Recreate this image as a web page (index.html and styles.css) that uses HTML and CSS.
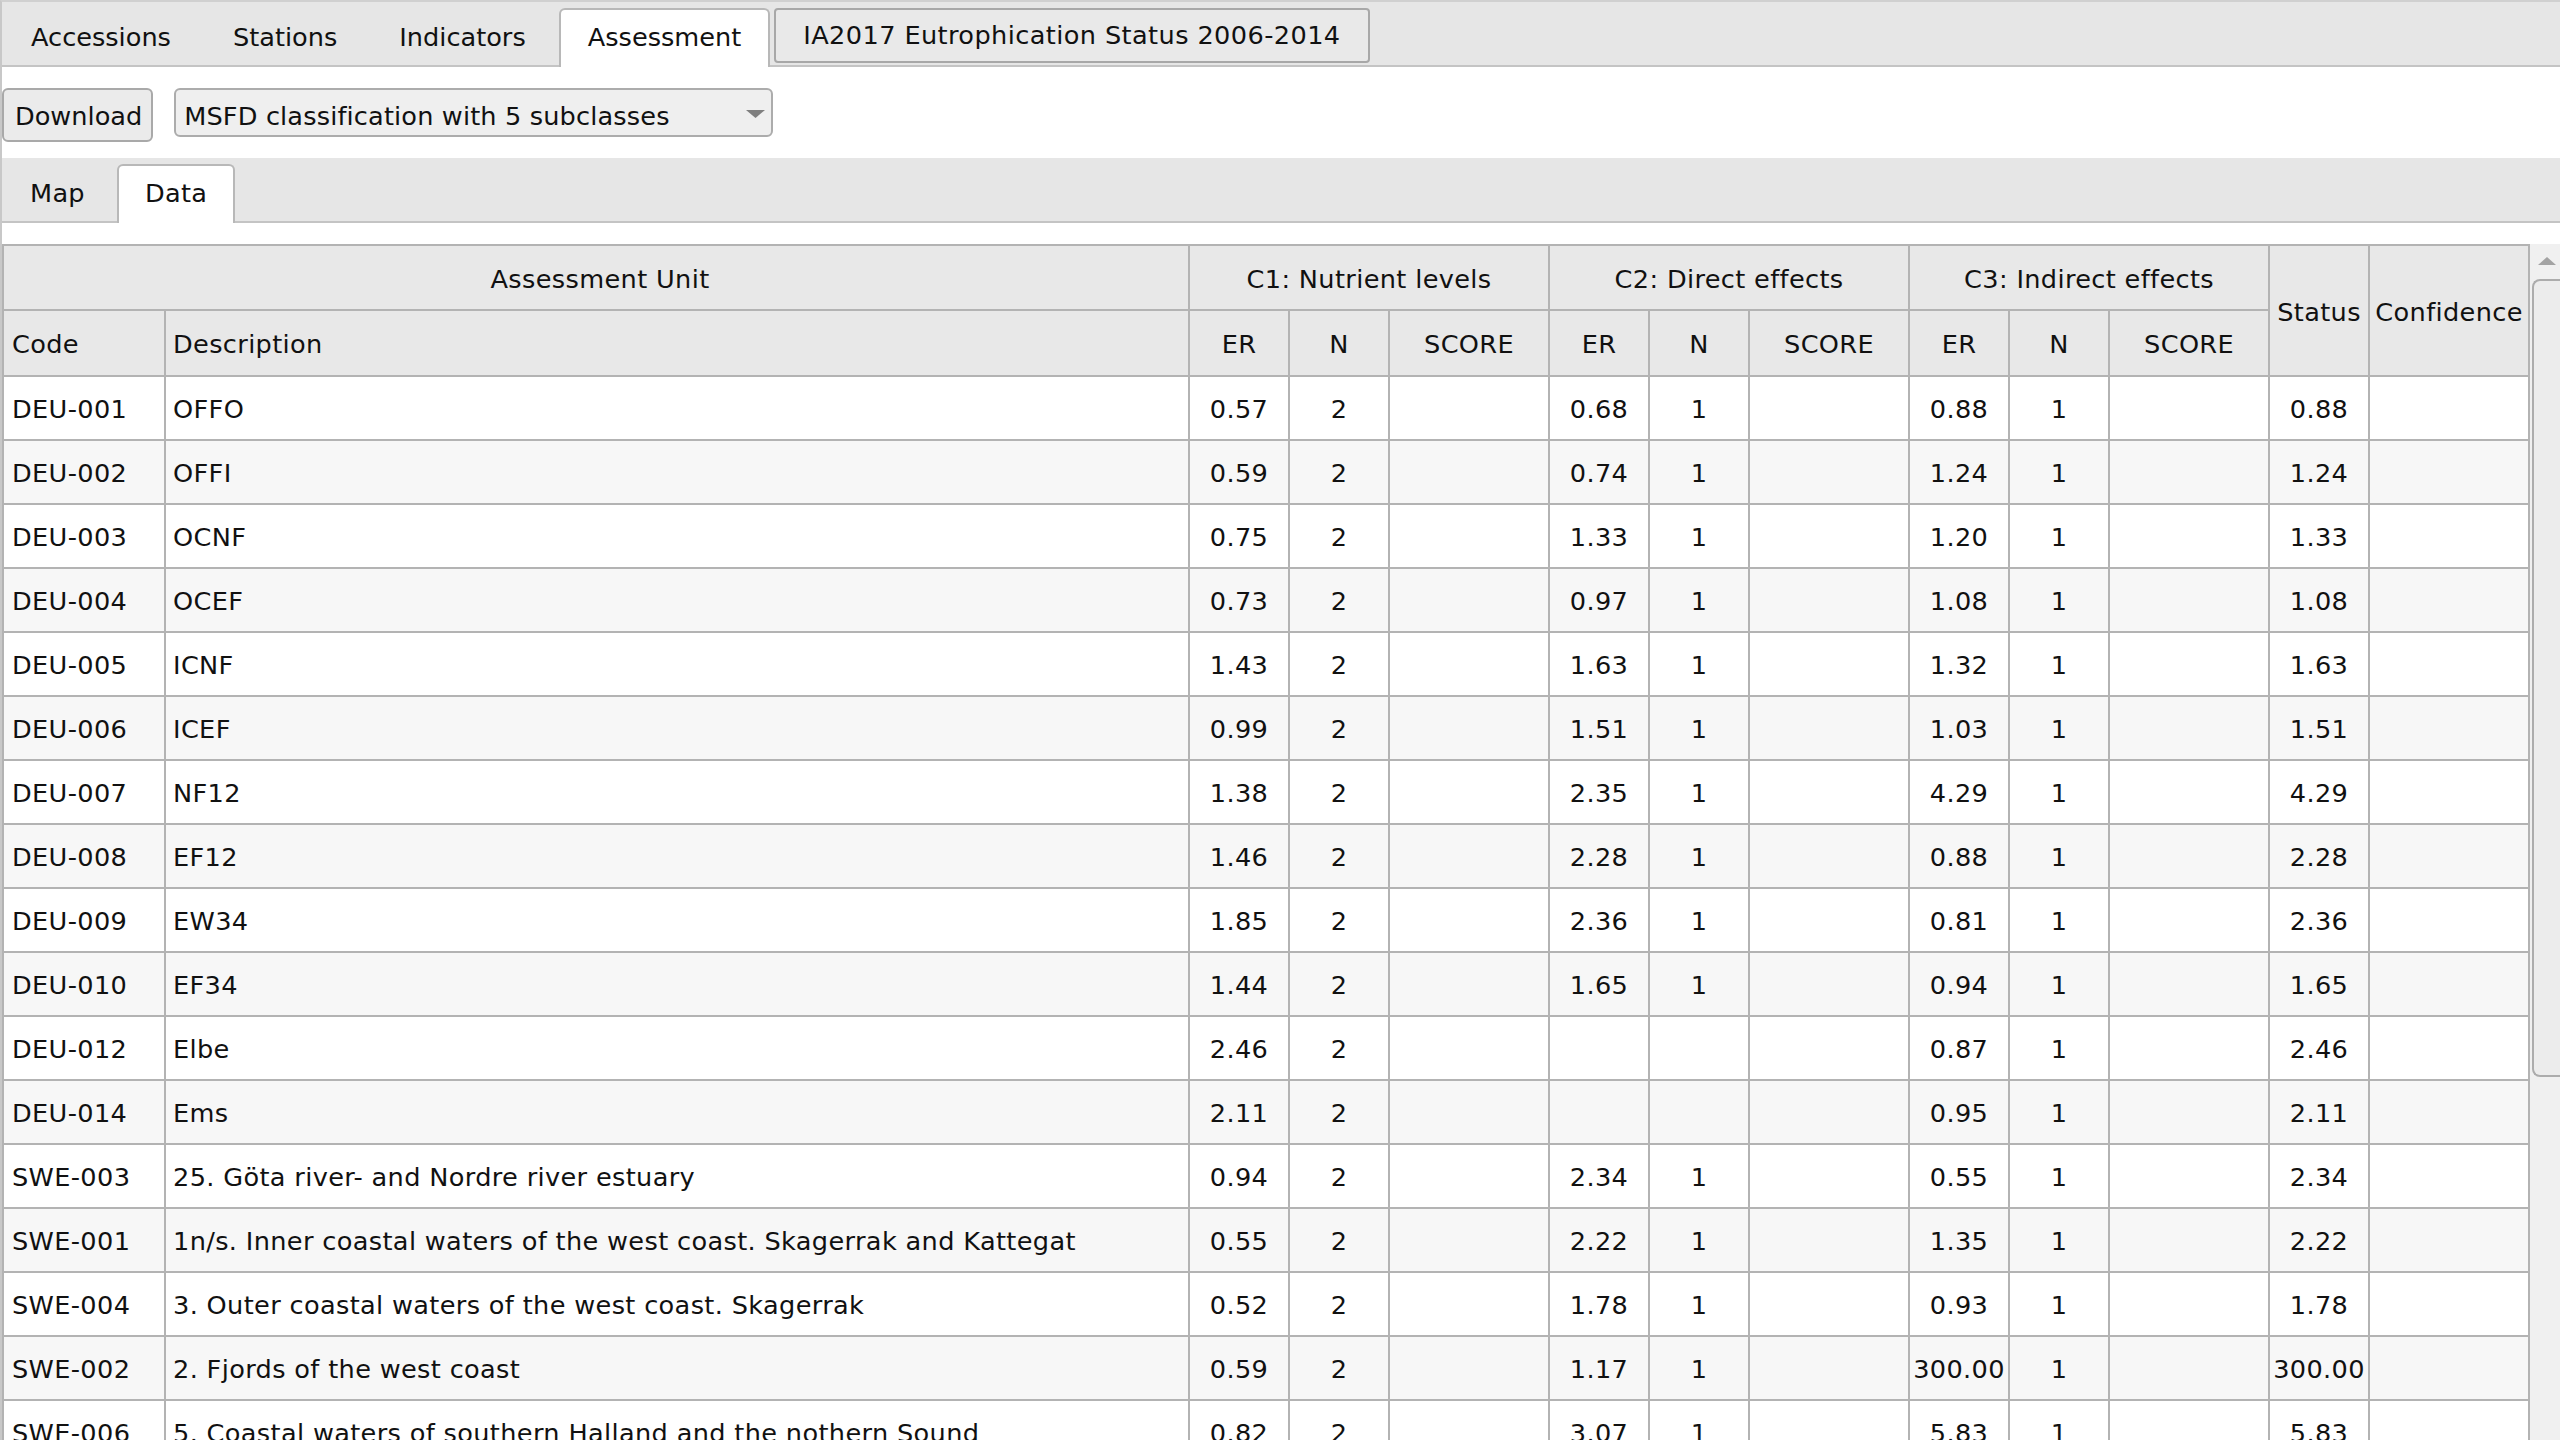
FILE: index.html
```html
<!DOCTYPE html>
<html lang="en">
<head>
<meta charset="utf-8">
<title>Assessment - Data</title>
<link rel="stylesheet" href="styles.css">
</head>
<body>
<div class="app">
  <nav class="tabs main-tabs">
    <div class="tab">Accessions</div>
    <div class="tab">Stations</div>
    <div class="tab">Indicators</div>
    <div class="tab active">Assessment</div>
    <div class="tab boxed">IA2017 Eutrophication Status 2006-2014</div>
  </nav>
  <div class="toolbar">
    <button class="btn" type="button">Download</button>
    <div class="select">
      <span>MSFD classification with 5 subclasses</span>
      <svg class="select-arrow" width="19" height="8" viewBox="0 0 19 8"><polygon points="0,0 19,0 9.5,8" fill="#7f7f7f"/></svg>
    </div>
  </div>
  <nav class="tabs sub-tabs">
    <div class="tab">Map</div>
    <div class="tab active">Data</div>
  </nav>
  <div class="data-area">
    <table class="grid">
      <colgroup>
        <col class="c-code"><col class="c-desc">
        <col class="c-n1"><col class="c-n1"><col class="c-sc">
        <col class="c-n1"><col class="c-n1"><col class="c-sc">
        <col class="c-n1"><col class="c-n1"><col class="c-sc">
        <col class="c-n1"><col class="c-sc">
      </colgroup>
      <thead>
        <tr class="h1">
          <th colspan="2" class="center">Assessment Unit</th>
          <th colspan="3" class="center">C1: Nutrient levels</th>
          <th colspan="3" class="center">C2: Direct effects</th>
          <th colspan="3" class="center">C3: Indirect effects</th>
          <th rowspan="2" class="center">Status</th>
          <th rowspan="2" class="center">Confidence</th>
        </tr>
        <tr class="h2">
          <th>Code</th>
          <th>Description</th>
          <th class="center">ER</th><th class="center">N</th><th class="center">SCORE</th>
          <th class="center">ER</th><th class="center">N</th><th class="center">SCORE</th>
          <th class="center">ER</th><th class="center">N</th><th class="center">SCORE</th>
        </tr>
      </thead>
      <tbody>
        <tr><td>DEU-001</td><td>OFFO</td><td class="num">0.57</td><td class="num">2</td><td></td><td class="num">0.68</td><td class="num">1</td><td></td><td class="num">0.88</td><td class="num">1</td><td></td><td class="num">0.88</td><td></td></tr>
        <tr><td>DEU-002</td><td>OFFI</td><td class="num">0.59</td><td class="num">2</td><td></td><td class="num">0.74</td><td class="num">1</td><td></td><td class="num">1.24</td><td class="num">1</td><td></td><td class="num">1.24</td><td></td></tr>
        <tr><td>DEU-003</td><td>OCNF</td><td class="num">0.75</td><td class="num">2</td><td></td><td class="num">1.33</td><td class="num">1</td><td></td><td class="num">1.20</td><td class="num">1</td><td></td><td class="num">1.33</td><td></td></tr>
        <tr><td>DEU-004</td><td>OCEF</td><td class="num">0.73</td><td class="num">2</td><td></td><td class="num">0.97</td><td class="num">1</td><td></td><td class="num">1.08</td><td class="num">1</td><td></td><td class="num">1.08</td><td></td></tr>
        <tr><td>DEU-005</td><td>ICNF</td><td class="num">1.43</td><td class="num">2</td><td></td><td class="num">1.63</td><td class="num">1</td><td></td><td class="num">1.32</td><td class="num">1</td><td></td><td class="num">1.63</td><td></td></tr>
        <tr><td>DEU-006</td><td>ICEF</td><td class="num">0.99</td><td class="num">2</td><td></td><td class="num">1.51</td><td class="num">1</td><td></td><td class="num">1.03</td><td class="num">1</td><td></td><td class="num">1.51</td><td></td></tr>
        <tr><td>DEU-007</td><td>NF12</td><td class="num">1.38</td><td class="num">2</td><td></td><td class="num">2.35</td><td class="num">1</td><td></td><td class="num">4.29</td><td class="num">1</td><td></td><td class="num">4.29</td><td></td></tr>
        <tr><td>DEU-008</td><td>EF12</td><td class="num">1.46</td><td class="num">2</td><td></td><td class="num">2.28</td><td class="num">1</td><td></td><td class="num">0.88</td><td class="num">1</td><td></td><td class="num">2.28</td><td></td></tr>
        <tr><td>DEU-009</td><td>EW34</td><td class="num">1.85</td><td class="num">2</td><td></td><td class="num">2.36</td><td class="num">1</td><td></td><td class="num">0.81</td><td class="num">1</td><td></td><td class="num">2.36</td><td></td></tr>
        <tr><td>DEU-010</td><td>EF34</td><td class="num">1.44</td><td class="num">2</td><td></td><td class="num">1.65</td><td class="num">1</td><td></td><td class="num">0.94</td><td class="num">1</td><td></td><td class="num">1.65</td><td></td></tr>
        <tr><td>DEU-012</td><td>Elbe</td><td class="num">2.46</td><td class="num">2</td><td></td><td></td><td></td><td></td><td class="num">0.87</td><td class="num">1</td><td></td><td class="num">2.46</td><td></td></tr>
        <tr><td>DEU-014</td><td>Ems</td><td class="num">2.11</td><td class="num">2</td><td></td><td></td><td></td><td></td><td class="num">0.95</td><td class="num">1</td><td></td><td class="num">2.11</td><td></td></tr>
        <tr><td>SWE-003</td><td>25. Göta river- and Nordre river estuary</td><td class="num">0.94</td><td class="num">2</td><td></td><td class="num">2.34</td><td class="num">1</td><td></td><td class="num">0.55</td><td class="num">1</td><td></td><td class="num">2.34</td><td></td></tr>
        <tr><td>SWE-001</td><td>1n/s. Inner coastal waters of the west coast. Skagerrak and Kattegat</td><td class="num">0.55</td><td class="num">2</td><td></td><td class="num">2.22</td><td class="num">1</td><td></td><td class="num">1.35</td><td class="num">1</td><td></td><td class="num">2.22</td><td></td></tr>
        <tr><td>SWE-004</td><td>3. Outer coastal waters of the west coast. Skagerrak</td><td class="num">0.52</td><td class="num">2</td><td></td><td class="num">1.78</td><td class="num">1</td><td></td><td class="num">0.93</td><td class="num">1</td><td></td><td class="num">1.78</td><td></td></tr>
        <tr><td>SWE-002</td><td>2. Fjords of the west coast</td><td class="num">0.59</td><td class="num">2</td><td></td><td class="num">1.17</td><td class="num">1</td><td></td><td class="num">300.00</td><td class="num">1</td><td></td><td class="num">300.00</td><td></td></tr>
        <tr><td>SWE-006</td><td>5. Coastal waters of southern Halland and the nothern Sound</td><td class="num">0.82</td><td class="num">2</td><td></td><td class="num">3.07</td><td class="num">1</td><td></td><td class="num">5.83</td><td class="num">1</td><td></td><td class="num">5.83</td><td></td></tr>
      </tbody>
    </table>
    <div class="scrollbar">
      <svg class="scroll-up" width="18" height="8" viewBox="0 0 18 8"><polygon points="9,0 18,8 0,8" fill="#a3a3a3"/></svg>
      <div class="thumb"></div>
    </div>
  </div>
</div>
</body>
</html>
```
FILE: styles.css
```css
html, body {
  margin: 0;
  padding: 0;
  height: 100%;
  overflow: hidden;
}

body {
  background: #ffffff;
  color: #111111;
  font-family: "DejaVu Sans", Verdana, sans-serif;
  font-size: 25.6px;
  letter-spacing: 0.3px;
}

.app {
  box-sizing: border-box;
  height: 1440px;
  display: flex;
  flex-direction: column;
  border-top: 2px solid #d0d0d0;
  border-left: 2px solid #c8c8c8;
  overflow: hidden;
}

/* ---------- tab bars ---------- */
.tabs {
  box-sizing: border-box;
  flex: none;
  display: flex;
  align-items: flex-start;
  height: 65px;
  padding-top: 6px;
  background: #e6e6e6;
  border-bottom: 2px solid #c4c4c4;
  letter-spacing: 0;
}

.tab {
  box-sizing: border-box;
  height: 59px;
  margin-right: 4px;
  padding: 0 27px 4px;
  border: 2px solid transparent;
  border-bottom: 0;
  border-radius: 6px 6px 0 0;
  line-height: 53px;
  white-space: nowrap;
}

.main-tabs .tab {
  padding-top: 1px;
  padding-bottom: 3px;
}

.sub-tabs .tab {
  line-height: 54px;
  padding: 0 26px 3px;
  letter-spacing: 0.3px;
}

.tab.active {
  background: #ffffff;
  border-color: #b8b8b8;
}

.main-tabs .tab.boxed {
  height: 55px;
  padding: 0 27px;
  line-height: 51px;
  letter-spacing: 0.4px;
  border: 2px solid #a8a8a8;
  border-radius: 4px;
  background: #e9e9e9;
}

/* ---------- toolbar ---------- */
.toolbar {
  flex: none;
  display: flex;
  align-items: flex-start;
  gap: 21px;
  padding: 21px 0 16px;
}

.btn {
  box-sizing: border-box;
  height: 54px;
  margin: 0;
  padding: 11px 9px 9px 11px;
  font: inherit;
  line-height: 30px;
  letter-spacing: 0;
  color: inherit;
  background: #ebebeb;
  border: 2px solid #a9a9a9;
  border-radius: 6px;
}

.select {
  box-sizing: border-box;
  width: 599px;
  height: 49px;
  display: flex;
  justify-content: space-between;
  align-items: flex-start;
  padding: 11px 6px 0 8px;
  line-height: 30px;
  letter-spacing: 0.15px;
  background: #efefef;
  border: 2px solid #acacac;
  border-radius: 6px;
  white-space: nowrap;
}

.select-arrow {
  margin-top: 9px;
  flex: none;
}

/* ---------- data area ---------- */
.data-area {
  flex: 1;
  min-height: 0;
  display: flex;
  align-items: stretch;
  margin-top: 21px;
  overflow: hidden;
}

.grid {
  flex: none;
  align-self: flex-start;
  width: 2528px;
  table-layout: fixed;
  border-collapse: separate;
  border-spacing: 0;
  border-top: 2px solid #b3b3b3;
  border-left: 2px solid #b3b3b3;
  letter-spacing: 0.35px;
}

.c-code { width: 162px; }
.c-desc { width: 1024px; }
.c-n1 { width: 100px; }
.c-sc { width: 160px; }

.grid th,
.grid td {
  box-sizing: border-box;
  padding: 2px 0 0 7px;
  border-right: 2px solid #b3b3b3;
  border-bottom: 2px solid #b3b3b3;
  text-align: left;
  vertical-align: middle;
  white-space: nowrap;
  overflow: hidden;
  font-weight: normal;
}

.grid th {
  background: #e8e8e8;
}

.grid tr th:first-child,
.grid tr td:first-child {
  padding-left: 8px;
}

.grid th.center,
.grid td.num {
  text-align: center;
  padding: 2px 0 0;
}

.grid tr.h1 { height: 65px; }
.grid tr.h2 { height: 66px; }
.grid tbody tr { height: 64px; }

.grid tbody tr:nth-child(even) td {
  background: #f7f7f7;
}

/* ---------- scrollbar ---------- */
.scrollbar {
  flex: none;
  width: 30px;
  display: flex;
  flex-direction: column;
  background: #f0f0f0;
  overflow: hidden;
}

.scroll-up {
  flex: none;
  margin: 13px 0 0 8px;
}

.thumb {
  flex: none;
  box-sizing: border-box;
  width: 36px;
  height: 798px;
  margin: 14px 0 0 2px;
  background: #ececec;
  border: 2px solid #acacac;
  border-right: 0;
  border-radius: 8px 0 0 8px;
}
```
